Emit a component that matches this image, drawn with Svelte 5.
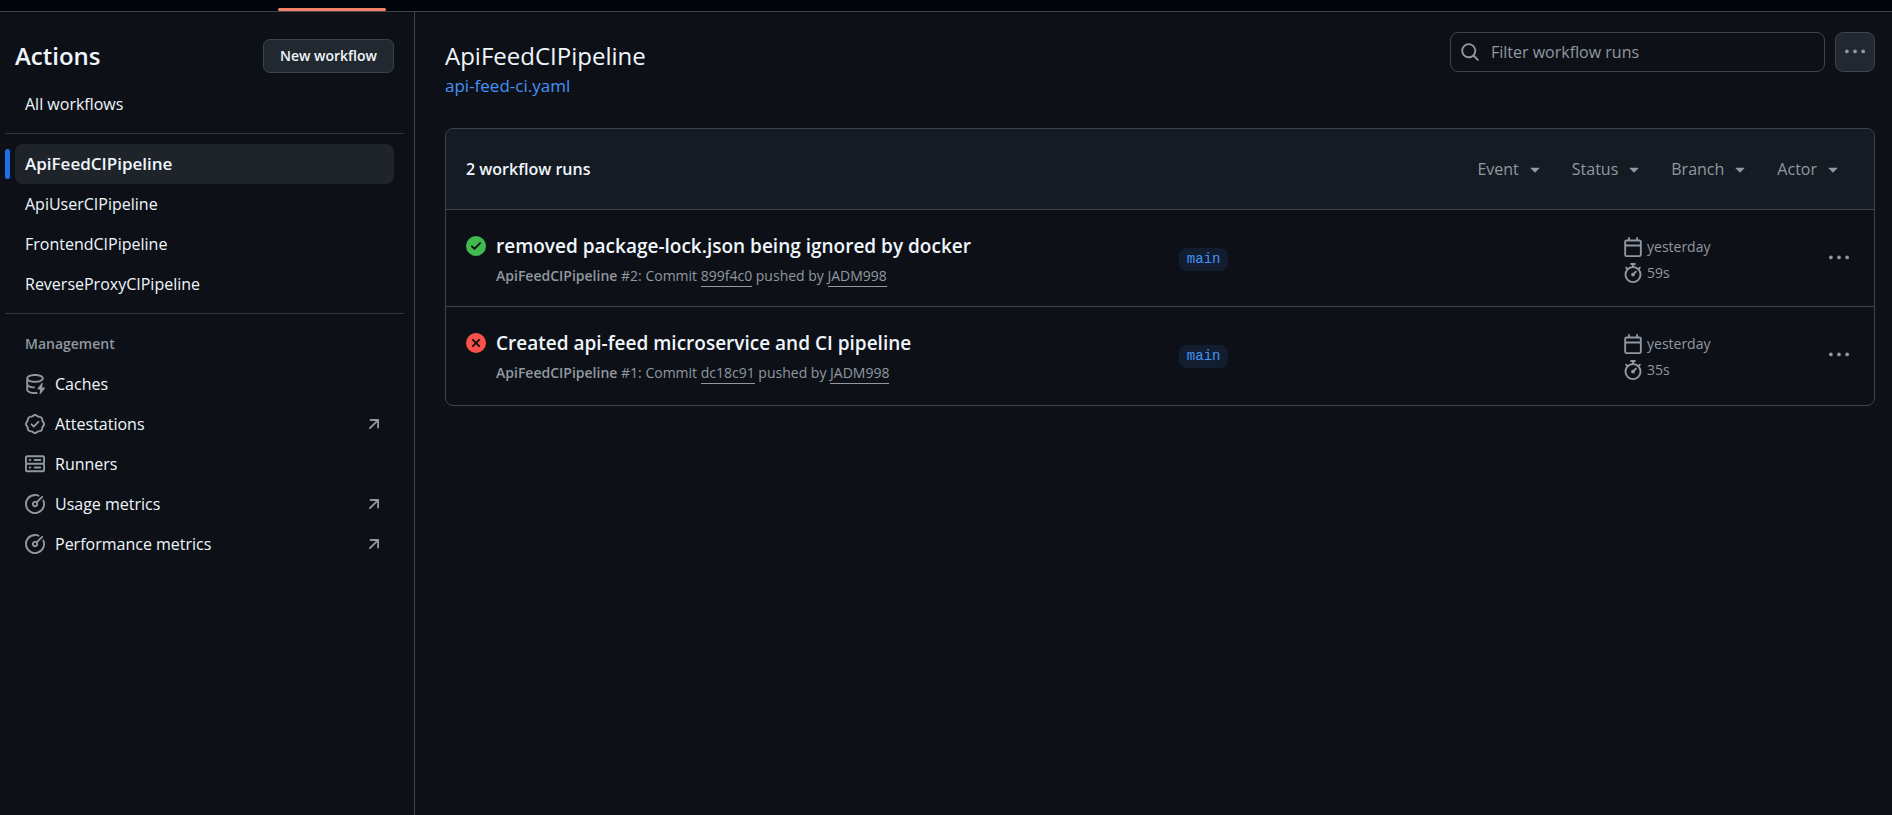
<script>
  const workflows = ['ApiFeedCIPipeline', 'ApiUserCIPipeline', 'FrontendCIPipeline', 'ReverseProxyCIPipeline'];
  let selected = $state('ApiFeedCIPipeline');
  let query = $state('');

  const management = [
    { label: 'Caches', icon: 'cache', external: false },
    { label: 'Attestations', icon: 'verified', external: true },
    { label: 'Runners', icon: 'server', external: false },
    { label: 'Usage metrics', icon: 'meter', external: true },
    { label: 'Performance metrics', icon: 'meter', external: true },
  ];

  const filters = ['Event', 'Status', 'Branch', 'Actor'];

  const runs = [
    { ok: true, title: 'removed package-lock.json being ignored by docker', number: 2, commit: '899f4c0', actor: 'JADM998', branch: 'main', date: 'yesterday', duration: '59s' },
    { ok: false, title: 'Created api-feed microservice and CI pipeline', number: 1, commit: 'dc18c91', actor: 'JADM998', branch: 'main', date: 'yesterday', duration: '35s' },
  ];

  const icons = {
    cache: 'M2.5 5.724V8c0 .248.238.7 1.169 1.159.874.43 2.144.745 3.62.822a.75.75 0 1 1-.078 1.498c-1.622-.085-3.102-.432-4.204-.975a5.565 5.565 0 0 1-.507-.28V12.5c0 .133.058.318.282.551.227.237.591.483 1.101.707 1.015.447 2.47.742 4.117.742.406 0 .802-.018 1.183-.052a.751.751 0 1 1 .134 1.494C8.89 15.98 8.45 16 8 16c-1.805 0-3.475-.32-4.721-.869-.623-.274-1.173-.619-1.579-1.041-.408-.425-.7-.964-.7-1.59v-9c0-.626.292-1.165.7-1.591.406-.42.956-.766 1.579-1.04C4.525.32 6.195 0 8 0c1.806 0 3.476.32 4.721.869.623.274 1.173.619 1.579 1.041.408.425.7.964.7 1.59 0 .626-.292 1.165-.7 1.591-.406.42-.956.766-1.578 1.04C11.475 6.68 9.805 7 8 7c-1.805 0-3.475-.32-4.721-.869a6.15 6.15 0 0 1-.779-.407Zm0-2.224c0 .133.058.318.282.551.227.237.591.483 1.101.707C4.898 5.205 6.353 5.5 8 5.5c1.646 0 3.101-.295 4.118-.742.508-.224.873-.471 1.1-.708.224-.232.282-.417.282-.55 0-.133-.058-.318-.282-.551-.227-.237-.591-.483-1.101-.707C11.102 1.795 9.647 1.5 8 1.5c-1.646 0-3.101.295-4.118.742-.508.224-.873.471-1.1.708-.224.232-.282.417-.282.55ZM14.1 7.5a.4.4 0 0 0-.72-.3l-3.3 4.3a.5.5 0 0 0 .4.8h1.7l-.5 3.3a.4.4 0 0 0 .72.3l3.5-4.4a.5.5 0 0 0-.4-.8h-1.8Z',
    verified: 'm9.585.52.929.68c.153.112.331.186.518.215l1.138.175a2.678 2.678 0 0 1 2.24 2.24l.174 1.139c.029.187.103.365.215.518l.68.928a2.677 2.677 0 0 1 0 3.17l-.68.928a1.174 1.174 0 0 0-.215.518l-.175 1.138a2.678 2.678 0 0 1-2.241 2.241l-1.138.175a1.17 1.17 0 0 0-.518.215l-.928.68a2.677 2.677 0 0 1-3.17 0l-.928-.68a1.174 1.174 0 0 0-.518-.215L3.83 14.41a2.678 2.678 0 0 1-2.24-2.24l-.175-1.138a1.17 1.17 0 0 0-.215-.518l-.68-.928a2.677 2.677 0 0 1 0-3.17l.68-.928c.112-.153.186-.331.215-.518l.175-1.14a2.678 2.678 0 0 1 2.24-2.24l1.139-.175c.187-.029.365-.103.518-.215l.928-.68a2.677 2.677 0 0 1 3.17 0ZM7.303 1.728l-.927.68a2.67 2.67 0 0 1-1.18.489l-1.137.174a1.179 1.179 0 0 0-.987.987l-.174 1.136a2.677 2.677 0 0 1-.489 1.18l-.68.928a1.18 1.18 0 0 0 0 1.394l.68.927c.256.348.424.753.489 1.18l.174 1.137c.078.509.478.909.987.987l1.136.174a2.67 2.67 0 0 1 1.18.489l.928.68c.414.305.979.305 1.394 0l.927-.68a2.67 2.67 0 0 1 1.18-.489l1.137-.174a1.18 1.18 0 0 0 .987-.987l.174-1.136a2.67 2.67 0 0 1 .489-1.18l.68-.928a1.176 1.176 0 0 0 0-1.394l-.68-.927a2.686 2.686 0 0 1-.489-1.18l-.174-1.137a1.179 1.179 0 0 0-.987-.987l-1.136-.174a2.677 2.677 0 0 1-1.18-.489l-.928-.68a1.176 1.176 0 0 0-1.394 0ZM11.28 6.78l-3.75 3.75a.75.75 0 0 1-1.06 0L4.72 8.78a.751.751 0 0 1 .018-1.042.751.751 0 0 1 1.042-.018L7 8.94l3.22-3.22a.751.751 0 0 1 1.042.018.751.751 0 0 1 .018 1.042Z',
    server: 'M1.75 1h12.5c.966 0 1.75.784 1.75 1.75v4c0 .372-.116.717-.314 1 .198.283.314.628.314 1v4a1.75 1.75 0 0 1-1.75 1.75H1.75A1.75 1.75 0 0 1 0 12.75v-4c0-.358.109-.707.314-1a1.739 1.739 0 0 1-.314-1v-4C0 1.784.784 1 1.75 1ZM1.5 2.75v4c0 .138.112.25.25.25h12.5a.25.25 0 0 0 .25-.25v-4a.25.25 0 0 0-.25-.25H1.75a.25.25 0 0 0-.25.25Zm.25 5.75a.25.25 0 0 0-.25.25v4c0 .138.112.25.25.25h12.5a.25.25 0 0 0 .25-.25v-4a.25.25 0 0 0-.25-.25ZM7 4.75A.75.75 0 0 1 7.75 4h4.5a.75.75 0 0 1 0 1.5h-4.5A.75.75 0 0 1 7 4.75ZM7.75 10h4.5a.75.75 0 0 1 0 1.5h-4.5a.75.75 0 0 1 0-1.5ZM3 4.75A.75.75 0 0 1 3.75 4h.5a.75.75 0 0 1 0 1.5h-.5A.75.75 0 0 1 3 4.75ZM3.75 10h.5a.75.75 0 0 1 0 1.5h-.5a.75.75 0 0 1 0-1.5Z',
    meter: 'M8 1.5a6.5 6.5 0 1 0 6.016 4.035.75.75 0 0 1 1.388-.57 8 8 0 1 1-4.37-4.37.75.75 0 0 1-.569 1.389A6.473 6.473 0 0 0 8 1.5Zm6.28.22a.75.75 0 0 1 0 1.06l-4.063 4.064a2.5 2.5 0 1 1-1.06-1.06L13.22 1.72a.75.75 0 0 1 1.06 0ZM7 8a1 1 0 1 0 2 0 1 1 0 0 0-2 0Z',
    arrow: 'M4.53 4.75A.75.75 0 0 1 5.28 4h6.01a.75.75 0 0 1 .75.75v6.01a.75.75 0 0 1-1.5 0v-4.2l-5.26 5.261a.749.749 0 0 1-1.275-.326.749.749 0 0 1 .215-.734L9.48 5.5h-4.2a.75.75 0 0 1-.75-.75Z',
    search: 'M10.68 11.74a6 6 0 0 1-7.922-8.982 6 6 0 0 1 8.982 7.922l3.04 3.04a.749.749 0 0 1-.326 1.275.749.749 0 0 1-.734-.215ZM11.5 7a4.499 4.499 0 1 0-8.997 0A4.499 4.499 0 0 0 11.5 7Z',
    kebab: 'M8 9a1.5 1.5 0 1 0 0-3 1.5 1.5 0 0 0 0 3ZM1.5 9a1.5 1.5 0 1 0 0-3 1.5 1.5 0 0 0 0 3Zm13 0a1.5 1.5 0 1 0 0-3 1.5 1.5 0 0 0 0 3Z',
    success: 'M8 16A8 8 0 1 1 8 0a8 8 0 0 1 0 16Zm3.78-9.72a.751.751 0 0 0-.018-1.042.751.751 0 0 0-1.042-.018L6.75 9.19 5.28 7.72a.751.751 0 0 0-1.042.018.751.751 0 0 0-.018 1.042l2 2a.75.75 0 0 0 1.06 0Z',
    failure: 'M2.343 13.657A8 8 0 1 1 13.658 2.343 8 8 0 0 1 2.343 13.657ZM6.03 4.97a.751.751 0 0 0-1.042.018.751.751 0 0 0-.018 1.042L6.94 8 4.97 9.97a.749.749 0 0 0 .326 1.275.749.749 0 0 0 .734-.215L8 9.06l1.97 1.97a.749.749 0 0 0 1.275-.326.749.749 0 0 0-.215-.734L9.06 8l1.97-1.97a.749.749 0 0 0-.326-1.275.749.749 0 0 0-.734.215L8 6.94Z',
    calendar: 'M4.75 0a.75.75 0 0 1 .75.75V2h5V.75a.75.75 0 0 1 1.5 0V2h1.25c.966 0 1.75.784 1.75 1.75v10.5A1.75 1.75 0 0 1 13.25 16H2.75A1.75 1.75 0 0 1 1 14.25V3.75C1 2.784 1.784 2 2.75 2H4V.75A.75.75 0 0 1 4.75 0ZM2.5 7.5v6.75c0 .138.112.25.25.25h10.5a.25.25 0 0 0 .25-.25V7.5Zm10.75-4H2.75a.25.25 0 0 0-.25.25V6h11V3.75a.25.25 0 0 0-.25-.25Z',
    stopwatch: 'M5.75.75A.75.75 0 0 1 6.5 0h3a.75.75 0 0 1 0 1.5h-.75v1l-.001.041a6.724 6.724 0 0 1 3.464 1.435l.007-.006.75-.75a.749.749 0 0 1 1.275.326.749.749 0 0 1-.215.734l-.75.75-.006.007a6.75 6.75 0 1 1-10.548 0L2.72 5.03l-.75-.75a.751.751 0 0 1 .018-1.042.751.751 0 0 1 1.042-.018l.75.75.007.006A6.72 6.72 0 0 1 7.25 2.541V1.5H6.5a.75.75 0 0 1-.75-.75ZM8 14.5a5.25 5.25 0 1 0-.001-10.501A5.25 5.25 0 0 0 8 14.5Zm.389-6.7 1.33-1.33a.75.75 0 1 1 1.061 1.06L9.45 8.861A1.503 1.503 0 0 1 8 10.75a1.499 1.499 0 1 1 .389-2.95Z',
    caret: 'm4.427 7.427 3.396 3.396a.25.25 0 0 0 .354 0l3.396-3.396A.25.25 0 0 0 11.396 7H4.604a.25.25 0 0 0-.177.427Z',
  };
</script>

{#snippet icon(name)}
  <svg class="icon" class:icon-success={name === 'success'} class:icon-failure={name === 'failure'} viewBox="0 0 16 16" aria-hidden="true"><path d={icons[name]} /></svg>
{/snippet}

<div class="page">
  <div class="tabs"><span class="current-tab"></span></div>
  <div class="columns">
    <aside>
      <header class="side-head">
        <h2>Actions</h2>
        <button class="new" type="button">New workflow</button>
      </header>
      <nav aria-label="Actions workflows">
        <ul>
          <li><a class="item" href="#all">All workflows</a></li>
        </ul>
        <hr />
        <ul>
          {#each workflows as name}
            <li>
              <a
                class="item"
                class:selected={selected === name}
                aria-current={selected === name ? 'page' : undefined}
                href={'#' + name}
                onclick={() => (selected = name)}>{name}</a>
            </li>
          {/each}
        </ul>
        <hr />
        <h3>Management</h3>
        <ul>
          {#each management as entry}
            <li>
              <a class="item" href={'#' + entry.label.toLowerCase().replace(' ', '-')}>
                {@render icon(entry.icon)}
                <span class="label">{entry.label}</span>
                {#if entry.external}{@render icon('arrow')}{/if}
              </a>
            </li>
          {/each}
        </ul>
      </nav>
    </aside>

    <main>
      <header class="main-head">
        <div>
          <h1>ApiFeedCIPipeline</h1>
          <a class="file" href="#file">api-feed-ci.yaml</a>
        </div>
        <div class="tools">
          <label class="search">
            {@render icon('search')}
            <input type="text" placeholder="Filter workflow runs" aria-label="Filter workflow runs" bind:value={query} />
          </label>
          <button class="more" type="button" aria-label="Show workflow options">{@render icon('kebab')}</button>
        </div>
      </header>

      <section class="box">
        <header class="box-head">
          <strong>2 workflow runs</strong>
          <div class="filters">
            {#each filters as name}
              <button type="button" aria-haspopup="menu">{name}{@render icon('caret')}</button>
            {/each}
          </div>
        </header>
        {#each runs as run}
          <article class="run">
            <div class="summary">
              <span class="state">{@render icon(run.ok ? 'success' : 'failure')}</span>
              <div>
                <a class="title" href={'#run-' + run.number}>{run.title}</a>
                <p><b>ApiFeedCIPipeline</b> #{run.number}: Commit <a href={'#' + run.commit}>{run.commit}</a> pushed by <a href={'#' + run.actor}>{run.actor}</a></p>
              </div>
            </div>
            <div class="branch"><a href={'#' + run.branch}>{run.branch}</a></div>
            <div class="meta">
              <div class="times">
                <span>{@render icon('calendar')}{run.date}</span>
                <span>{@render icon('stopwatch')}{run.duration}</span>
              </div>
              <button type="button" aria-label="Show run options">{@render icon('kebab')}</button>
            </div>
          </article>
        {/each}
      </section>
    </main>
  </div>
</div>

<style>
  :global(body) {
    background: #0d1117;
  }
  .page {
    display: flex;
    flex-direction: column;
    min-height: 100vh;
    color: #f0f6fc;
    font: 16px/24px "Open Sans", "Noto Sans", sans-serif;
  }
  .page * {
    box-sizing: border-box;
  }
  h1, h2, h3, p, ul {
    margin: 0;
    padding: 0;
  }
  ul {
    list-style: none;
  }
  a {
    color: inherit;
    text-decoration: none;
  }
  button {
    border: 0;
    padding: 0;
    background: none;
    color: inherit;
    font: inherit;
    cursor: pointer;
  }
  .icon {
    flex: none;
    display: block;
    width: 20px;
    height: 20px;
    fill: #9198a1;
  }
  .icon-success {
    fill: #3fb950;
  }
  .icon-failure {
    fill: #f85149;
  }

  .tabs {
    height: 12px;
    padding: 8px 0 0 278px;
    background: #010409;
    border-bottom: 1px solid #3d444d;
  }
  .current-tab {
    display: block;
    width: 108px;
    height: 3px;
    background: #f78166;
    border-radius: 2px;
  }
  .columns {
    flex: 1;
    display: flex;
  }

  aside {
    flex: none;
    width: 415px;
    padding: 26px 20px 20px 15px;
    border-right: 1px solid #3d444d;
  }
  .side-head {
    display: flex;
    align-items: center;
    justify-content: space-between;
    margin-bottom: 10px;
  }
  h2 {
    font-size: 24px;
    line-height: 36px;
    font-weight: 600;
  }
  .new {
    height: 34px;
    padding: 0 16px;
    border: 1px solid #3d444d;
    border-radius: 7px;
    background: #212830;
    font-size: 14px;
    font-weight: 600;
  }
  .item {
    position: relative;
    display: flex;
    align-items: center;
    gap: 10px;
    height: 40px;
    padding: 0 10px;
    border-radius: 8px;
  }
  .selected {
    background: #1f242b;
    font-size: 17px;
    font-weight: 600;
  }
  .selected::before {
    content: "";
    position: absolute;
    left: -10px;
    top: 5px;
    width: 5px;
    height: 30px;
    border-radius: 4px;
    background: #1f6feb;
  }
  .label {
    flex: 1;
  }
  hr {
    height: 1px;
    margin: 9px -10px 10px;
    border: 0;
    background: #2f353d;
  }
  h3 {
    padding: 10px;
    font-size: 14px;
    line-height: 20px;
    font-weight: 600;
    color: #9198a1;
  }

  main {
    flex: 1;
    min-width: 0;
    padding: 20px 17px 20px 30px;
  }
  .main-head {
    display: flex;
    justify-content: space-between;
    margin-bottom: 30px;
  }
  h1 {
    padding-top: 8px;
    font-size: 24px;
    line-height: 32px;
    font-weight: 400;
  }
  .file {
    display: block;
    margin-top: 2px;
    color: #4493f8;
    font-size: 17px;
  }
  .tools {
    display: flex;
    align-items: flex-start;
    gap: 10px;
  }
  .search {
    display: flex;
    align-items: center;
    gap: 11px;
    width: 375px;
    height: 40px;
    padding: 0 9px;
    border: 1px solid #3d444d;
    border-radius: 8px;
  }
  input {
    flex: 1;
    min-width: 0;
    padding: 0;
    border: 0;
    outline: 0;
    background: none;
    color: inherit;
    font: inherit;
  }
  input::placeholder {
    color: #9198a1;
    opacity: 1;
  }
  .more {
    display: grid;
    place-items: center;
    width: 40px;
    height: 40px;
    border: 1px solid #3d444d;
    border-radius: 8px;
    background: #212830;
  }

  .box {
    border: 1px solid #3d444d;
    border-radius: 8px;
  }
  .box-head {
    display: flex;
    align-items: center;
    justify-content: space-between;
    height: 80px;
    padding: 0 31px 0 20px;
    border-radius: 7px 7px 0 0;
    background: #151b23;
  }
  strong {
    font-weight: 600;
  }
  .filters {
    display: flex;
    gap: 27px;
    color: #9198a1;
  }
  .filters button {
    display: flex;
    align-items: center;
    gap: 6px;
  }
  .run {
    display: grid;
    grid-template-columns: 1fr 32% 231px;
    height: 97px;
    padding: 0 20px;
    border-top: 1px solid #3d444d;
  }
  .run:last-child {
    height: 99px;
  }
  .summary {
    display: flex;
    gap: 10px;
    padding-top: 24px;
  }
  .state {
    padding-top: 2px;
  }
  .title {
    display: block;
    font-size: 19px;
    font-weight: 600;
  }
  p {
    margin-top: 6px;
    font-size: 14px;
    color: #9198a1;
  }
  b {
    font-weight: 600;
  }
  p a {
    padding-bottom: 1px;
    border-bottom: 1px solid #9198a1;
  }
  .branch {
    display: flex;
    align-items: flex-start;
    padding-top: 38px;
  }
  .branch a {
    height: 23px;
    padding: 0 8px;
    border-radius: 8px;
    background: #121d2f;
    color: #4493f8;
    font: 14px/23px "Liberation Mono", monospace;
  }
  .meta {
    display: flex;
    justify-content: space-between;
    align-items: flex-start;
  }
  .times {
    display: flex;
    flex-direction: column;
    gap: 2px;
    padding-top: 25px;
    font-size: 14px;
    color: #9198a1;
  }
  .times span {
    display: flex;
    align-items: center;
    gap: 4px;
  }
  .meta button {
    width: 30px;
    height: 40px;
    margin-top: 28px;
    display: grid;
    place-items: center;
  }
</style>
